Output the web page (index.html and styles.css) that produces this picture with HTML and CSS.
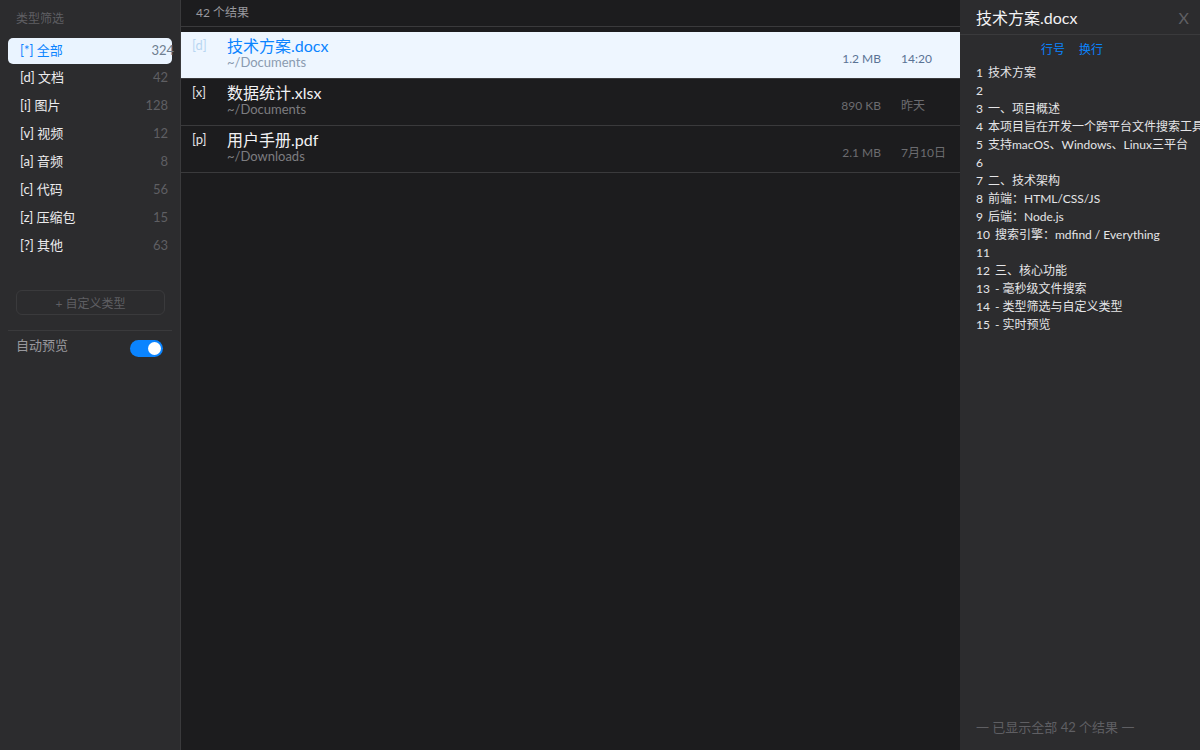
FILE: index.html
```html
<!DOCTYPE html>
<html lang="zh-CN">

<head>
  <meta charset="UTF-8">
  <meta name="viewport" content="width=device-width, initial-scale=1">
  <title>文件搜索</title>
  <link rel="stylesheet" href="styles.css">
</head>

<body>
  <div class="app">
    <aside class="sidebar">
      <h2 class="sidebar-title">类型筛选</h2>
      <ul class="type-list">
        <li class="type-item active"><span>[*] 全部</span><span class="count">324</span></li>
        <li class="type-item"><span>[d] 文档</span><span class="count">42</span></li>
        <li class="type-item"><span>[i] 图片</span><span class="count">128</span></li>
        <li class="type-item"><span>[v] 视频</span><span class="count">12</span></li>
        <li class="type-item"><span>[a] 音频</span><span class="count">8</span></li>
        <li class="type-item"><span>[c] 代码</span><span class="count">56</span></li>
        <li class="type-item"><span>[z] 压缩包</span><span class="count">15</span></li>
        <li class="type-item"><span>[?] 其他</span><span class="count">63</span></li>
      </ul>
      <button class="add-type">+ 自定义类型</button>
      <div class="auto-preview">
        <span class="auto-label">自动预览</span>
        <span class="toggle"><span class="knob"></span></span>
      </div>
    </aside>

    <main class="results">
      <div class="results-head">42 个结果</div>
      <ul class="file-list">
        <li class="file-row selected">
          <span class="file-icon">[d]</span>
          <div class="file-info">
            <div class="file-name">技术方案.docx</div>
            <div class="file-path">~/Documents</div>
          </div>
          <span class="file-size">1.2 MB</span>
          <span class="file-date">14:20</span>
        </li>
        <li class="file-row">
          <span class="file-icon">[x]</span>
          <div class="file-info">
            <div class="file-name">数据统计.xlsx</div>
            <div class="file-path">~/Documents</div>
          </div>
          <span class="file-size">890 KB</span>
          <span class="file-date">昨天</span>
        </li>
        <li class="file-row">
          <span class="file-icon">[p]</span>
          <div class="file-info">
            <div class="file-name">用户手册.pdf</div>
            <div class="file-path">~/Downloads</div>
          </div>
          <span class="file-size">2.1 MB</span>
          <span class="file-date">7月10日</span>
        </li>
      </ul>
    </main>

    <aside class="preview">
      <div class="preview-head">
        <span class="preview-title">技术方案.docx</span>
        <span class="preview-close">X</span>
      </div>
      <div class="preview-tools">
        <button>行号</button>
        <button>换行</button>
      </div>
      <div class="preview-body">
        <div class="line"><span class="ln">1</span>技术方案</div>
        <div class="line"><span class="ln">2</span></div>
        <div class="line"><span class="ln">3</span>一、项目概述</div>
        <div class="line"><span class="ln">4</span>本项目旨在开发一个跨平台文件搜索工具</div>
        <div class="line"><span class="ln">5</span>支持macOS、Windows、Linux三平台</div>
        <div class="line"><span class="ln">6</span></div>
        <div class="line"><span class="ln">7</span>二、技术架构</div>
        <div class="line"><span class="ln">8</span>前端：HTML/CSS/JS</div>
        <div class="line"><span class="ln">9</span>后端：Node.js</div>
        <div class="line"><span class="ln">10</span>搜索引擎：mdfind / Everything</div>
        <div class="line"><span class="ln">11</span></div>
        <div class="line"><span class="ln">12</span>三、核心功能</div>
        <div class="line"><span class="ln">13</span>- 毫秒级文件搜索</div>
        <div class="line"><span class="ln">14</span>- 类型筛选与自定义类型</div>
        <div class="line"><span class="ln">15</span>- 实时预览</div>
      </div>
      <div class="preview-foot">一 已显示全部 42 个结果 一</div>
    </aside>
  </div>
</body>

</html>
```

FILE: styles.css
```css
/* Reset */

*,
*::before,
*::after {
  box-sizing: border-box;
  margin: 0;
  padding: 0;
}

:root {
  --accent: #0a84ff;
  --panel-bg: #2c2c2e;
  --list-bg: #1c1c1e;
  --line: #3a3a3c;
  --text: #e5e5e7;
  --muted: #98989d;
  --dim: #5f5f63;
  --font: "Lato", "Noto Sans CJK SC", sans-serif;
}

body {
  font-family: var(--font);
  background: var(--list-bg);
  color: var(--text);
  overflow: hidden;
}

ul {
  list-style: none;
}

button {
  font-family: inherit;
  background: none;
  border: none;
  cursor: pointer;
}

/* Layout */

.app {
  display: flex;
  height: 750px;
}

/* Sidebar */

.sidebar {
  width: 181px;
  flex-shrink: 0;
  background: var(--panel-bg);
  border-right: 1px solid var(--line);
  padding: 10px 8px 0 8px;
}

.sidebar-title {
  font-size: 12px;
  font-weight: normal;
  color: var(--dim);
  padding-left: 8px;
  line-height: 18px;
  margin-bottom: 10px;
}

.type-item {
  display: flex;
  justify-content: space-between;
  align-items: center;
  height: 28px;
  padding: 0 4px 3px 12px;
  font-size: 13px;
  color: #ececee;
}

.type-item .count {
  color: var(--dim);
}

.type-item.active {
  height: 26px;
  background: #eaf4ff;
  color: var(--accent);
  border-radius: 5px;
  padding-right: 0;
}

.type-item.active .count {
  color: #6e7e90;
  margin-right: -2px;
}

.add-type {
  display: block;
  width: 149px;
  height: 25px;
  margin: 30px 0 15px 8px;
  border: 1px solid var(--line);
  border-radius: 6px;
  color: var(--dim);
  font-size: 12px;
}

.auto-preview {
  display: flex;
  justify-content: space-between;
  align-items: flex-start;
  border-top: 1px solid var(--line);
  padding: 0 9px 0 8px;
  font-size: 13px;
  color: var(--muted);
}

.auto-label {
  line-height: 16px;
  padding-top: 6px;
}

.toggle {
  display: flex;
  justify-content: flex-end;
  align-items: center;
  width: 33px;
  height: 17px;
  margin-top: 9px;
  padding: 2px;
  background: var(--accent);
  border-radius: 9px;
}

.knob {
  width: 13px;
  height: 13px;
  border-radius: 50%;
  background: #fff;
}

/* Results */

.results {
  flex: 1;
  background: var(--list-bg);
}

.results-head {
  height: 27px;
  padding: 3px 0 0 15px;
  font-size: 12px;
  color: var(--muted);
  border-bottom: 1px solid var(--line);
}

.file-list {
  padding-top: 5px;
}

.file-row {
  display: flex;
  align-items: flex-start;
  height: 47px;
  padding: 5px 0 0 11px;
  border-bottom: 1px solid var(--line);
}

.file-icon {
  width: 35px;
  font-size: 13px;
  line-height: 16px;
  color: var(--text);
}

.file-info {
  flex: 1;
}

.file-name {
  font-size: 16px;
  line-height: 18px;
  color: #f2f2f4;
}

.file-path {
  font-size: 13px;
  line-height: 14px;
  color: #7c7c80;
}

.file-size,
.file-date {
  font-size: 12px;
  line-height: 14px;
  color: #6c6c70;
  padding-top: 15px;
}

.file-size {
  width: 80px;
  text-align: right;
}

.file-date {
  width: 79px;
  padding-left: 20px;
  white-space: nowrap;
}

.file-row.selected {
  background: #eef6ff;
}

.file-row.selected .file-icon {
  color: #b9d6f2;
}

.file-row.selected .file-name {
  color: var(--accent);
}

.file-row.selected .file-path {
  color: #8a9bb0;
}

.file-row.selected .file-size,
.file-row.selected .file-date {
  color: #5a7395;
}

/* Preview panel */

.preview {
  width: 240px;
  flex-shrink: 0;
  background: var(--panel-bg);
  display: flex;
  flex-direction: column;
  overflow: hidden;
}

.preview-head {
  display: flex;
  justify-content: space-between;
  align-items: center;
  height: 35px;
  padding: 0 11px 0 16px;
  border-bottom: 1px solid var(--line);
}

.preview-title {
  font-size: 16px;
  color: #f2f2f4;
}

.preview-close {
  font-size: 16px;
  color: var(--dim);
}

.preview-tools {
  display: flex;
  gap: 14px;
  height: 29px;
  padding: 1px 0 0 81px;
}

.preview-tools button {
  color: var(--accent);
  font-size: 12px;
  line-height: 16px;
}

.preview-body {
  flex: 1;
  padding: 0 0 0 16px;
  font-size: 12px;
  line-height: 18px;
  color: var(--text);
  white-space: nowrap;
}

.ln {
  margin-right: 5px;
}

.preview-foot {
  padding: 0 0 14px 16px;
  font-size: 13px;
  color: var(--dim);
}
```
